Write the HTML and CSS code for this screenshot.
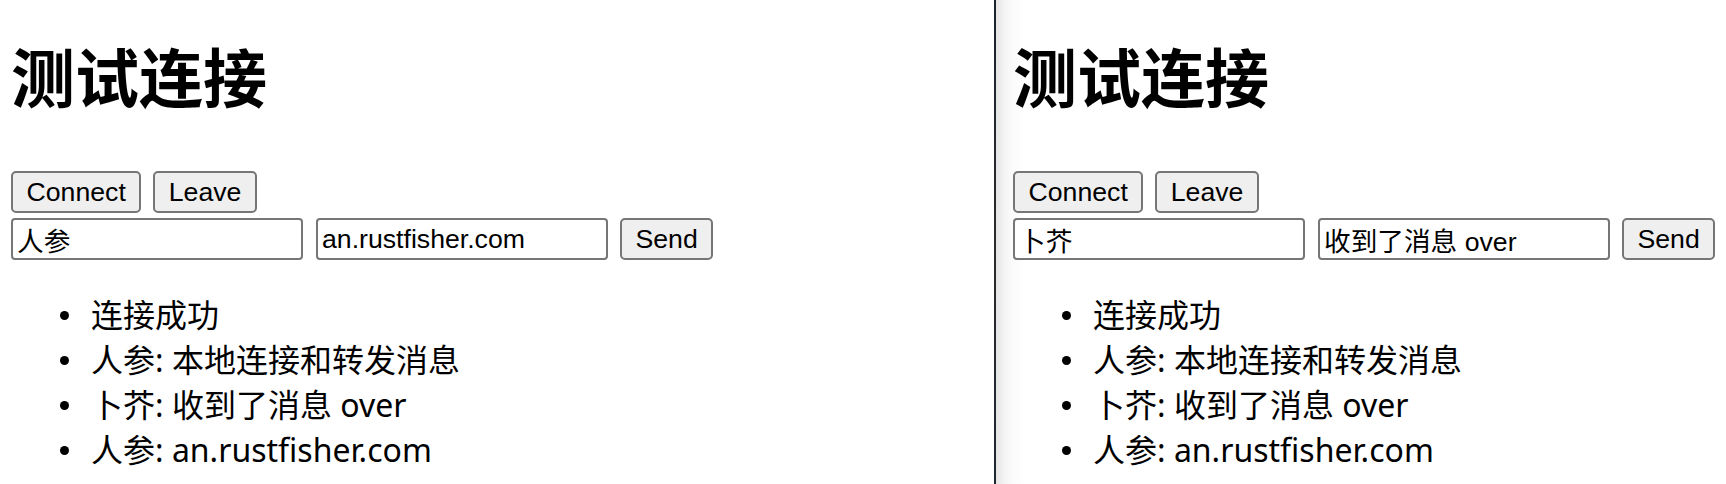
FILE: index.html
```html
<!DOCTYPE html>
<html lang="zh-CN">
<head>
<meta charset="utf-8">
<title>测试连接</title>
<link rel="stylesheet" href="styles.css">
</head>
<body>
<div class="desk">
  <section class="pane pane-left">
    <h1 class="title">测试连接</h1>
    <div class="row">
      <button class="btn">Connect</button>
      <button class="btn">Leave</button>
    </div>
    <div class="row">
      <input class="field" type="text" value="人参">
      <input class="field field-msg" type="text" value="an.rustfisher.com">
      <button class="btn">Send</button>
    </div>
    <ul class="log">
      <li>连接成功</li>
      <li>人参: 本地连接和转发消息</li>
      <li>卜芥: 收到了消息 over</li>
      <li>人参: an.rustfisher.com</li>
    </ul>
  </section>
  <div class="divider"></div>
  <section class="pane pane-right">
    <h1 class="title">测试连接</h1>
    <div class="row">
      <button class="btn">Connect</button>
      <button class="btn">Leave</button>
    </div>
    <div class="row">
      <input class="field" type="text" value="卜芥">
      <input class="field field-msg" type="text" value="收到了消息 over">
      <button class="btn">Send</button>
    </div>
    <ul class="log">
      <li>连接成功</li>
      <li>人参: 本地连接和转发消息</li>
      <li>卜芥: 收到了消息 over</li>
      <li>人参: an.rustfisher.com</li>
    </ul>
  </section>
</div>
</body>
</html>
```

FILE: styles.css
```css
html, body {
  margin: 0;
  padding: 0;
  background: #ffffff;
  overflow: hidden;
}

body {
  width: 1726px;
  height: 484px;
  font-family: "Liberation Sans", "Noto Sans CJK SC", sans-serif;
  color: #000;
}

.desk {
  display: flex;
  height: 484px;
}

.pane {
  display: flex;
  flex-direction: column;
  align-items: flex-start;
}

.pane-left {
  width: 994px;
  padding-left: 11px;
  box-sizing: border-box;
  background: #ffffff;
}

.divider {
  width: 2px;
  background: linear-gradient(to bottom, #1a2230, #2a2a2a 50%, #1e2633);
}

.pane-right {
  flex: 1;
  padding-left: 17px;
  background: linear-gradient(to right, #e4e4e4 0px, #f3f3f3 8px, #fbfbfb 16px, #ffffff 30px);
}

.title {
  margin: 29px 0 52px;
  font-size: 64px;
  line-height: 90px;
  font-weight: 700;
  font-family: "Noto Sans CJK SC", sans-serif;
}

.row {
  display: flex;
  gap: 12px;
  margin-bottom: 5px;
}

.btn {
  height: 42px;
  box-sizing: border-box;
  margin: 0;
  padding: 0 13.5px;
  font-family: "Liberation Sans", "Noto Sans CJK SC", sans-serif;
  font-size: 26.67px;
  line-height: 38px;
  color: #000;
  background: #efefef;
  border: 2px solid #767676;
  border-radius: 5px;
}

.field {
  width: 292px;
  height: 42px;
  box-sizing: border-box;
  margin: 0;
  padding: 0 4px;
  font-family: "Liberation Sans", "Noto Sans CJK SC", sans-serif;
  font-size: 26.67px;
  color: #000;
  background: #fff;
  border: 2px solid #767676;
  border-radius: 4px;
}

.field-msg {
  margin-left: 1px;
}

.log {
  list-style: none;
  margin: 27px 0 0;
  padding: 0 0 0 49px;
  font-family: "Noto Sans", "Noto Sans CJK SC", sans-serif;
  font-size: 32px;
  line-height: 45px;
}

.log li {
  display: flex;
  align-items: center;
  gap: 22px;
}

.log li::before {
  content: "";
  width: 9px;
  height: 9px;
  border-radius: 50%;
  background: #000;
  flex: none;
  margin-top: 2px;
}
```
